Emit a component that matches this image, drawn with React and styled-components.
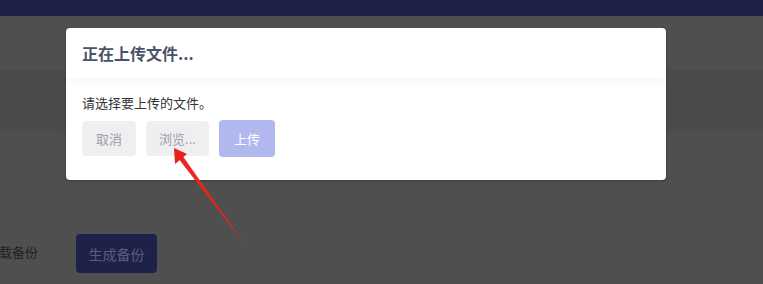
import React from "react";
import styled, { createGlobalStyle } from "styled-components";

const Global = createGlobalStyle`
  html, body { margin: 0; padding: 0; }
  body {
    background: #4f4f4f;
    font-family: "Noto Sans CJK SC", "Noto Sans", sans-serif;
    width: 763px; height: 284px; overflow: hidden;
  }
`;

const Page = styled.div`
  position: relative;
  width: 763px;
  height: 284px;
  overflow: hidden;
  background: #4f4f4f;
  display: flex;
  flex-direction: column;
`;

const NavBar = styled.div`
  height: 16px;
  flex: none;
  background: #1e2249;
`;

const Band = styled.div`
  height: ${p => p.$h}px;
  flex: none;
  background: ${p => p.$bg};
`;

const Row = styled.div`
  display: flex;
  align-items: center;
  gap: 38px;
  padding-top: 103px;
`;

const Label = styled.div`
  width: 38px;
  overflow: hidden;
  display: flex;
  justify-content: flex-end;
  white-space: nowrap;
  font-size: 13px;
  color: #1f1f1f;
  margin-top: -5px;
`;

const DarkButton = styled.div`
  width: 81px;
  height: 39px;
  box-sizing: border-box;
  border-radius: 4px;
  background: #1e2249;
  color: #5a5e7a;
  font-size: 14px;
  display: flex;
  align-items: center;
  justify-content: center;
`;

const Modal = styled.div`
  position: absolute;
  left: 66px;
  top: 28px;
  width: 600px;
  height: 152px;
  background: #fff;
  border-radius: 4px;
  box-shadow: 0 1px 3px rgba(0,0,0,0.25);
  display: flex;
  flex-direction: column;
  overflow: hidden;
`;

const Header = styled.div`
  height: 50px;
  flex: none;
  box-sizing: border-box;
  padding: 0 16px;
  display: flex;
  align-items: center;
  font-size: 16px;
  font-weight: 700;
  color: #4b5369;
  position: relative;
  box-shadow: 0 3px 8px rgba(0,0,0,0.045);
`;

const Body = styled.div`
  padding: 16px 16px 0;
  display: flex;
  flex-direction: column;
  gap: 8px;
`;

const Text = styled.div`
  font-size: 13px;
  color: #333;
  line-height: 18px;
`;

const Buttons = styled.div`
  display: flex;
  align-items: center;
  gap: 10px;
`;

const Btn = styled.div`
  width: ${p => p.$w}px;
  height: ${p => (p.$primary ? 37 : 35)}px;
  box-sizing: border-box;
  border-radius: 4px;
  background: ${p => (p.$primary ? "#b1b8ee" : "#efefef")};
  color: ${p => (p.$primary ? "#ffffff" : "#9aa1ab")};
  font-size: 13px;
  display: flex;
  align-items: center;
  justify-content: center;
  white-space: nowrap;
`;

const Arrow = styled.svg`
  position: absolute;
  left: 0;
  top: 0;
  pointer-events: none;
`;

export default function App() {
  return (
    <>
      <Global />
      <Page>
        <NavBar />
        <Band $h={54} $bg="#4f4f4f" />
        <Band $h={61} $bg="#494a4a" />
        <Row>
          <Label>下载备份</Label>
          <DarkButton>生成备份</DarkButton>
        </Row>
        <Modal>
          <Header>正在上传文件...</Header>
          <Body>
            <Text>请选择要上传的文件。</Text>
            <Buttons>
              <Btn $w={54}>取消</Btn>
              <Btn $w={63}>浏览...</Btn>
              <Btn $w={56} $primary>上传</Btn>
            </Buttons>
          </Body>
        </Modal>
        <Arrow width="763" height="284" viewBox="0 0 763 284">
          <defs>
            <linearGradient id="fade" x1="248" y1="250" x2="176" y2="152" gradientUnits="userSpaceOnUse">
              <stop offset="0" stopColor="#e8231c" stopOpacity="0" />
              <stop offset="0.25" stopColor="#e8231c" stopOpacity="0.9" />
              <stop offset="1" stopColor="#e8231c" />
            </linearGradient>
          </defs>
          <polygon points="249,250 178,158 182,155" fill="url(#fade)" />
          <polygon points="174,148 175,164 187,154" fill="#e8231c" />
        </Arrow>
      </Page>
    </>
  );
}
